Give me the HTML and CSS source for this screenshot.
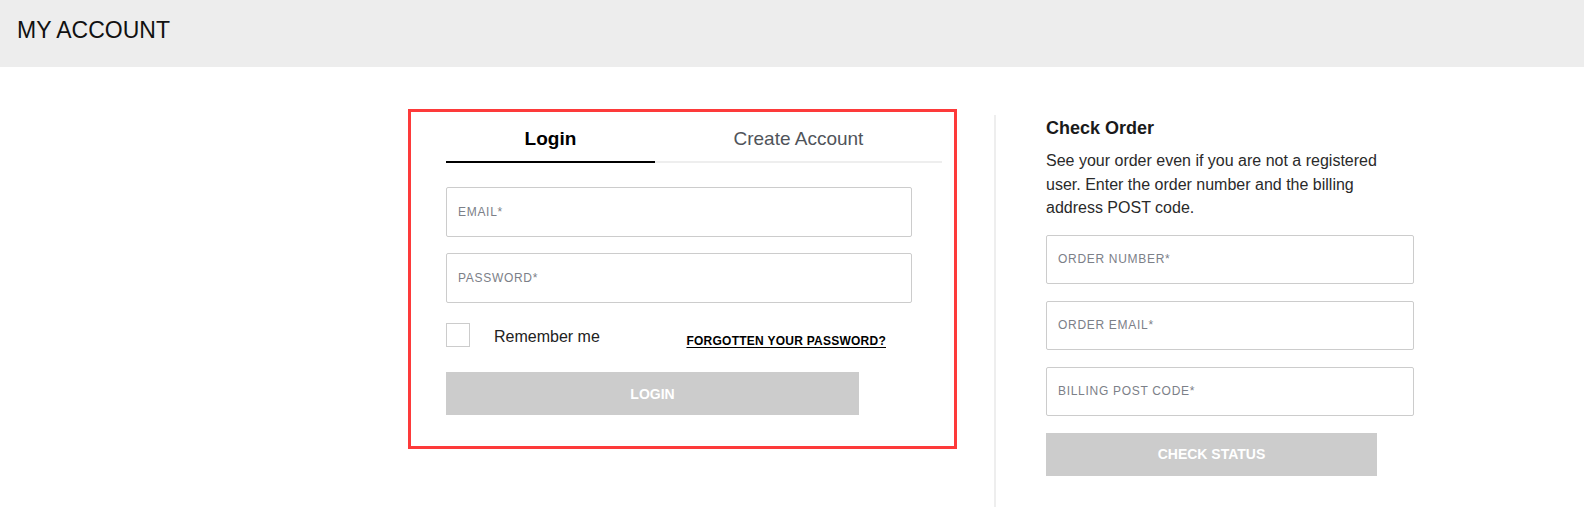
FILE: index.html
```html
<!DOCTYPE html>
<html lang="en">
<head>
<meta charset="utf-8">
<title>My Account</title>
<link rel="stylesheet" href="styles.css">
</head>
<body>
<header class="page-header">
  <h1 class="page-title">MY ACCOUNT</h1>
</header>
<main class="account">
  <section class="login-card">
    <nav class="tabs">
      <a class="tab tab-active">Login</a>
      <a class="tab">Create Account</a>
    </nav>
    <form class="form">
      <input class="field" type="email" placeholder="EMAIL*">
      <input class="field field-gap" type="password" placeholder="PASSWORD*">
      <div class="options">
        <label class="remember">
          <input class="checkbox" type="checkbox">
          <span class="remember-text">Remember me</span>
        </label>
        <a class="forgot" href="#">FORGOTTEN YOUR PASSWORD?</a>
      </div>
      <button class="btn btn-login" type="button">LOGIN</button>
    </form>
  </section>
  <div class="divider"></div>
  <section class="check-order">
    <h2 class="check-title">Check Order</h2>
    <p class="check-text">See your order even if you are not a registered user. Enter the order number and the billing address POST code.</p>
    <input class="field" type="text" placeholder="ORDER NUMBER*">
    <input class="field field-gap2" type="email" placeholder="ORDER EMAIL*">
    <input class="field field-gap2" type="text" placeholder="BILLING POST CODE*">
    <button class="btn btn-check" type="button">CHECK STATUS</button>
  </section>
</main>
</body>
</html>
```

FILE: styles.css
```css
* {
  box-sizing: border-box;
}

html, body {
  margin: 0;
  padding: 0;
  background: #fff;
}

body {
  font-family: "Liberation Sans", Arial, sans-serif;
  color: #1a1a1a;
  min-height: 100vh;
  display: flex;
  flex-direction: column;
}

.page-header {
  height: 67px;
  background: #ededed;
  padding: 17px 17px 0;
}

.page-title {
  margin: 0;
  font-size: 23px;
  font-weight: 400;
  line-height: 26px;
  color: #111;
  letter-spacing: 0;
}

.account {
  flex: 1;
  display: flex;
  align-items: stretch;
  padding: 42px 0 0 408px;
}

.login-card {
  width: 549px;
  align-self: flex-start;
  border: 3px solid #fd3a3a;
  padding: 15px 12px 31px 35px;
}

.tabs {
  display: flex;
}

.tab {
  flex: 1 1 auto;
  text-align: center;
  font-size: 19px;
  line-height: 24px;
  padding-bottom: 10px;
  border-bottom: 2px solid #eeeeee;
  color: #50545a;
  cursor: pointer;
}

.tab-active {
  font-weight: 700;
  color: #000;
  border-bottom-color: #000;
}

.form {
  display: flex;
  flex-direction: column;
  margin-top: 24px;
}

.field {
  display: block;
  width: 466px;
  height: 50px;
  margin: 0;
  border: 1px solid #cccccc;
  border-radius: 2px;
  padding: 0 11px;
  font-family: "Liberation Sans", Arial, sans-serif;
  font-size: 12px;
  letter-spacing: 0.7px;
  color: #222;
  background: #fff;
  outline: none;
}

.field::placeholder {
  color: #7c8088;
  opacity: 1;
}

.field-gap {
  margin-top: 16px;
}

.options {
  width: 440px;
  display: flex;
  justify-content: space-between;
  align-items: flex-start;
  margin-top: 20px;
}

.remember {
  display: flex;
  align-items: flex-start;
}

.checkbox {
  appearance: none;
  -webkit-appearance: none;
  width: 24px;
  height: 24px;
  margin: 0;
  border: 1px solid #cccccc;
  background: #fff;
}

.remember-text {
  margin-left: 24px;
  margin-top: 2px;
  font-size: 16px;
  line-height: 24px;
  color: #222;
}

.forgot {
  margin-top: 10px;
  font-size: 12px;
  line-height: 16px;
  font-weight: 700;
  letter-spacing: 0.25px;
  color: #000;
  text-decoration: underline;
  text-underline-offset: 2px;
}

.btn {
  display: block;
  border: 0;
  margin: 0;
  background: #cccccc;
  color: #fff;
  font-family: "Liberation Sans", Arial, sans-serif;
  font-weight: 700;
  font-size: 14px;
  cursor: pointer;
}

.btn-login {
  width: 413px;
  height: 43px;
  margin-top: 23px;
}

.divider {
  width: 2px;
  background: #eeeeee;
  margin: 6px 0 0 37px;
}

.check-order {
  margin: 7px 0 0 50px;
  width: 368px;
}

.check-title {
  margin: 0;
  font-size: 18px;
  font-weight: 700;
  line-height: 24px;
  color: #1a1a1a;
}

.check-text {
  margin: 9px 0 15px;
  max-width: 345px;
  font-size: 16px;
  line-height: 23.6px;
  color: #2a2a2a;
}

.check-order .field {
  width: 368px;
  height: 49px;
}

.field-gap2 {
  margin-top: 17px;
}

.btn-check {
  width: 331px;
  height: 43px;
  margin-top: 17px;
}
```
